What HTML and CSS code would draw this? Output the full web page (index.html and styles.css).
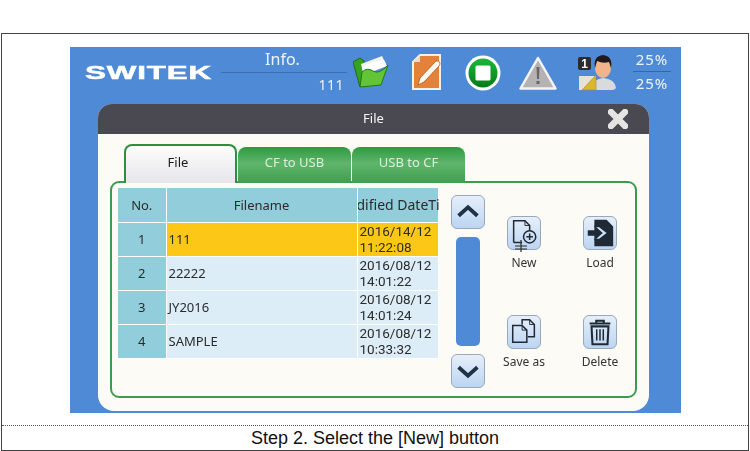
FILE: index.html
```html
<!DOCTYPE html>
<html lang="en">
<head>
    <meta charset="UTF-8">
    <title>Step 2. Select the [New] button</title>
    <link rel="stylesheet" href="styles.css">
</head>
<body>
    <div class="frame">
        <div class="shot">
            <div class="screen">
                <div class="topbar">
                    <div class="logo"><span>SWITEK</span></div>
                    <div class="info">
                        <div class="info-label">Info.</div>
                        <div class="info-value">111</div>
                    </div>
                    <svg class="icon icon-folder" viewBox="0 0 36 34">
                        <path d="M0 7 L7 3 L11 6 L10 20 L7 32 Z" fill="#35a31f" stroke="#1c6d14"/>
                        <path d="M8 9 L29 1 L33 9 L10 18 Z" fill="#f2f2e6"/>
                        <path d="M9 12 Q20 6 31 5 L34 11 L11 20 Z" fill="#fff"/>
                        <path d="M7 32 L9 17 Q14 12 20 16 T35 10 L28 30 Z" fill="#62c436" stroke="#1f7a16"/>
                    </svg>
                    <svg class="icon icon-note" viewBox="0 0 29 36">
                        <path d="M8 1 H28 V35 H1 V8 Z" fill="#e58239" stroke="#f6f1ea" stroke-width="2"/>
                        <path d="M8 1 V8 H1 Z" fill="#f7d9bf"/>
                        <path d="M24 7 Q27 6 28 9 Q28 11 27 12 L12 28 L6 31 L8 24 Z" fill="#fbf6ee" stroke="#a9591f" stroke-width=".8"/>
                    </svg>
                    <svg class="icon icon-stop" viewBox="0 0 36 36">
                        <defs>
                            <linearGradient id="stopfill" x1="0" y1="0" x2="0" y2="1">
                                <stop offset="0" stop-color="#18b83a"/>
                                <stop offset="1" stop-color="#067a18"/>
                            </linearGradient>
                        </defs>
                        <circle cx="18" cy="18" r="17.500" fill="#fff"/>
                        <circle cx="18" cy="18" r="14.500" fill="url(#stopfill)"/>
                        <rect x="10.500" y="10.500" width="15" height="15" rx="1.500" fill="#fff"/>
                    </svg>
                    <svg class="icon icon-warn" viewBox="0 0 38 34">
                        <path d="M19 2 L36.500 32.500 H1.500 Z" fill="#b5b2b4" stroke="#f4f4f4" stroke-width="2.500" stroke-linejoin="round"/>
                        <path d="M17.500 11 H20.500 L20 23 H18 Z" fill="#6b6769"/>
                        <rect x="17.500" y="25" width="3" height="3" fill="#6b6769"/>
                    </svg>
                    <svg class="icon icon-user" viewBox="0 0 38 36">
                        <path d="M14 35 Q14 24 25 23 Q37 24 38 33 Q37 35 34 35 Z" fill="#d8dadb"/>
                        <ellipse cx="25" cy="13" rx="8" ry="10" fill="#f2b48c"/>
                        <path d="M17 13 Q15 1 25 0 Q35 1 33 13 L31 7 Q25 9 19 6 Z" fill="#211c1a"/>
                        <rect x="0" y="2" width="13" height="13" rx="2" fill="#2c2c2e"/>
                        <text class="badge-num" x="6.500" y="13">1</text>
                        <rect x="1" y="21" width="17" height="14" fill="#e6e3d6"/>
                        <path d="M18 20 V35 H4 Z" fill="#d9b72f" stroke="#a98d1d" stroke-width=".6"/>
                    </svg>
                    <div class="percent">
                        <div class="percent-top">25%</div>
                        <div class="percent-low">25%</div>
                    </div>
                </div>

                <div class="dialog">
                    <div class="dialog-head">
                        File
                        <svg class="close" viewBox="0 0 20 20">
                            <path d="M3 3 L17 17 M17 3 L3 17" stroke="#e6e4e2" stroke-width="6.500" stroke-linecap="round"/>
                        </svg>
                    </div>
                    <div class="dialog-body">
                        <div class="tabs">
                            <div class="tab tab-active">File</div>
                            <div class="tab">CF to USB</div>
                            <div class="tab">USB to CF</div>
                        </div>
                        <div class="panel">
                            <table class="files">
                                <colgroup>
                                    <col class="col-no">
                                    <col class="col-name">
                                    <col class="col-date">
                                </colgroup>
                                <tr class="head-row">
                                    <th>No.</th>
                                    <th>Filename</th>
                                    <th><div class="clip"><span>Modified DateTime</span></div></th>
                                </tr>
                                <tr class="selected">
                                    <td class="no">1</td>
                                    <td>111</td>
                                    <td class="date">2016/14/12<br>11:22:08</td>
                                </tr>
                                <tr>
                                    <td class="no">2</td>
                                    <td>22222</td>
                                    <td class="date">2016/08/12<br>14:01:22</td>
                                </tr>
                                <tr>
                                    <td class="no">3</td>
                                    <td>JY2016</td>
                                    <td class="date">2016/08/12<br>14:01:24</td>
                                </tr>
                                <tr>
                                    <td class="no">4</td>
                                    <td>SAMPLE</td>
                                    <td class="date">2016/08/12<br>10:33:32</td>
                                </tr>
                            </table>

                            <div class="scroller">
                                <div class="btn">
                                    <svg viewBox="0 0 34 34"><path d="M7 21 L17 12 L27 21" class="chevron"/></svg>
                                </div>
                                <div class="scroll-bar"></div>
                                <div class="btn">
                                    <svg viewBox="0 0 34 34"><path d="M7 13 L17 22 L27 13" class="chevron"/></svg>
                                </div>
                            </div>

                            <div class="actions">
                                <div class="action">
                                    <div class="btn">
                                        <svg viewBox="0 0 34 34">
                                            <path d="M6 27 V4 H18 L23 9 V15" class="line"/>
                                            <path d="M18 4 V9 H23" class="line thin"/>
                                            <path d="M6 27 H15" class="line"/>
                                            <circle cx="23" cy="21" r="6.500" class="line"/>
                                            <path d="M23 17.500 V24.500 M19.500 21 H26.500" class="line"/>
                                        </svg>
                                        <svg class="cursor" viewBox="0 0 14 14">
                                            <path d="M7 1 V13 M1 7 H13 M1 10 H13" stroke="#2b2b2b" stroke-width="1.200" fill="none"/>
                                        </svg>
                                    </div>
                                    <div class="action-label">New</div>
                                </div>
                                <div class="action">
                                    <div class="btn">
                                        <svg viewBox="0 0 34 34">
                                            <path d="M11 3 H24 L31 10 V31 H11 V23 H16 L24 17 L16 11 H11 Z" fill="#1f2a36"/>
                                            <path d="M4 14 H11 V9 L20 17 L11 25 V20 H4 Z" fill="#1f2a36"/>
                                        </svg>
                                    </div>
                                    <div class="action-label">Load</div>
                                </div>
                                <div class="action">
                                    <div class="btn">
                                        <svg viewBox="0 0 34 34">
                                            <path d="M15 9 V4 H23 L28 9 V22 H21" class="line"/>
                                            <path d="M23 4 V9 H28" class="line thin"/>
                                            <path d="M5 10 H15 L20 15 V28 H5 Z" class="line"/>
                                            <path d="M15 10 V15 H20" class="line thin"/>
                                        </svg>
                                    </div>
                                    <div class="action-label">Save as</div>
                                </div>
                                <div class="action">
                                    <div class="btn">
                                        <svg viewBox="0 0 34 34">
                                            <path d="M6 8 H28 M13 8 V5 H21 V8" class="line bold"/>
                                            <path d="M8 11 H26 L25 30 H9 Z" class="line bold"/>
                                            <path d="M13.500 14 V26 M17 14 V26 M20.500 14 V26" class="line"/>
                                        </svg>
                                    </div>
                                    <div class="action-label">Delete</div>
                                </div>
                            </div>
                        </div>
                    </div>
                </div>
            </div>
        </div>
        <div class="caption">Step 2. Select the [New] button</div>
    </div>
</body>
</html>
```

FILE: styles.css
```css
* {
    box-sizing: border-box;
}
body {
    margin: 0;
    padding: 33px 1px 0 1px;
    background-color: white;
    font-family: "Noto Sans", "Open Sans", sans-serif;
}
.frame {
    width: 748px;
    height: 418px;
    border: 1px solid #444;
}
.shot {
    height: 392px;
    padding: 13px 0 0 68px;
    border-bottom: 1px dotted #555;
}
.caption {
    height: 24px;
    line-height: 24px;
    text-align: center;
    font-family: "Liberation Sans", Arial, sans-serif;
    font-size: 18px;
    color: #111;
}
.screen {
    width: 611px;
    height: 366px;
    background-color: #4f8ad6;
    overflow: hidden;
    filter: blur(0.35px);
}

/* top bar */
.topbar {
    display: flex;
    align-items: flex-start;
    height: 57px;
    padding-top: 5px;
    color: #eef4fb;
}
.logo {
    width: 127px;
    margin: 12px 0 0 15px;
    font-family: "Liberation Sans", Arial, sans-serif;
    font-weight: bold;
    font-size: 19px;
    line-height: 18px;
    color: white;
}
.logo span {
    display: inline-block;
    letter-spacing: 0.5px;
    -webkit-text-stroke: 0.5px white;
    transform-origin: left center;
    transform: scaleX(1.65);
}
.info {
    width: 126px;
    margin-left: 9px;
    text-align: center;
}
.info-label {
    height: 20px;
    padding-right: 3px;
    font-size: 16px;
    line-height: 15px;
    border-bottom: 1px solid #3d70b3;
    box-sizing: content-box;
}
.info-value {
    padding: 3px 3px 0 0;
    text-align: right;
    font-size: 14px;
    line-height: 18px;
    letter-spacing: 0.5px;
}
.icon {
    flex: none;
    display: block;
    margin-top: 3px;
}
.icon-folder {
    width: 36px;
    height: 34px;
    margin-left: 6px;
}
.icon-note {
    width: 29px;
    height: 36px;
    margin-left: 23px;
    margin-top: 2px;
}
.icon-stop {
    width: 36px;
    height: 36px;
    margin-left: 24px;
}
.icon-warn {
    width: 38px;
    height: 36px;
    margin-left: 18px;
}
.icon-user {
    width: 38px;
    height: 36px;
    margin-left: 21px;
}
.badge-num {
    font-family: "Liberation Sans", Arial, sans-serif;
    font-size: 12px;
    font-weight: bold;
    fill: white;
    text-anchor: middle;
}
.percent {
    width: 38px;
    margin-left: 17px;
    font-size: 15px;
    line-height: 18px;
    letter-spacing: 1px;
    text-align: center;
}
.percent-top {
    margin-top: -2px;
}
.percent-low {
    margin-top: 3px;
    border-top: 1px solid #3566a8;
    padding-top: 2px;
}

/* dialog */
.dialog {
    width: 551px;
    height: 307px;
    margin-left: 28px;
    border-radius: 14px 14px 16px 16px;
    background-color: #fdfbf5;
    overflow: hidden;
}
.dialog-head {
    position: relative;
    height: 30px;
    background-color: #4a4850;
    color: #f6f6f6;
    font-size: 13px;
    line-height: 29px;
    text-align: center;
}
.close {
    position: absolute;
    top: 5px;
    right: 21px;
    width: 20px;
    height: 20px;
}
.dialog-body {
    padding: 8px 12px 0 12px;
}
.tabs {
    position: relative;
    display: flex;
    align-items: flex-end;
    gap: 1px;
    height: 41px;
    margin-bottom: -2px;
    padding-left: 14px;
}
.tab {
    width: 113px;
    height: 36px;
    padding-top: 6px;
    border-radius: 8px 8px 0 0;
    background: linear-gradient(#2f9a3f, #5fb56c 45%, #3f9f4e);
    color: #dcefdc;
    font-size: 13px;
    text-align: center;
}
.tab-active {
    height: 39px;
    padding: 7px 5px 0 0;
    border: 2px solid #2e8f3f;
    border-bottom: none;
    background: linear-gradient(#fdfdfb, #e6e6ec);
    color: #1c1c1c;
}
.panel {
    display: flex;
    align-items: flex-start;
    height: 217px;
    padding: 5px 0 0 6px;
    border: 2px solid #3f9a50;
    border-radius: 9px;
}

/* file table */
.files {
    flex: none;
    width: 320px;
    table-layout: fixed;
    border-collapse: collapse;
    font-size: 13px;
    color: #2b2b2b;
}
.col-no {
    width: 48px;
}
.col-name {
    width: 191px;
}
.col-date {
    width: 81px;
}
.files th,
.files td {
    height: 34px;
    padding: 0;
    border: 1px solid white;
    border-top: none;
    border-left: none;
    font-weight: normal;
}
.files th {
    background-color: #92cddc;
    text-align: center;
}
.files td {
    padding-left: 2px;
    background-color: #dcedf7;
}
.files .date {
    font-family: Roboto, "Noto Sans", sans-serif;
    font-size: 13.5px;
    line-height: 16.5px;
    white-space: nowrap;
    overflow: hidden;
}
.files td:last-child,
.files th:last-child {
    border-right: none;
}
.files .no {
    padding: 0;
    background-color: #92cddc;
    text-align: center;
}
.files .selected td {
    background-color: #fdc718;
}
.files .selected .no {
    background-color: #92cddc;
}
.clip {
    display: flex;
    justify-content: center;
    width: 81px;
    overflow: hidden;
    white-space: nowrap;
    font-size: 14px;
}
.clip span {
    flex: none;
}

/* buttons */
.btn {
    position: relative;
    width: 34px;
    height: 34px;
    border: 1px solid #98a8bc;
    border-radius: 6px;
    background: linear-gradient(#e6effa, #bcd5f2);
}
.btn svg {
    display: block;
    width: 32px;
    height: 32px;
}
.btn .cursor {
    position: absolute;
    left: 6px;
    bottom: -4px;
    width: 14px;
    height: 14px;
}
.chevron {
    fill: none;
    stroke: #1f3346;
    stroke-width: 4;
}
.line {
    fill: none;
    stroke: #1f2a36;
    stroke-width: 1.6;
}
.thin {
    stroke-width: 1;
}
.bold {
    stroke-width: 2.2;
}
.scroller {
    flex: none;
    display: flex;
    flex-direction: column;
    align-items: center;
    gap: 8px;
    width: 34px;
    margin: 7px 0 0 13px;
}
.scroll-bar {
    width: 24px;
    height: 109px;
    border-radius: 5px;
    background-color: #4f8ad6;
}
.actions {
    display: grid;
    grid-template-columns: 60px 60px;
    grid-template-rows: 99px 99px;
    column-gap: 16px;
    margin: 28px 0 0 9px;
}
.action {
    display: flex;
    flex-direction: column;
    align-items: center;
}
.action-label {
    margin-top: 5px;
    font-size: 12px;
    line-height: 16px;
    color: #333;
}
```
